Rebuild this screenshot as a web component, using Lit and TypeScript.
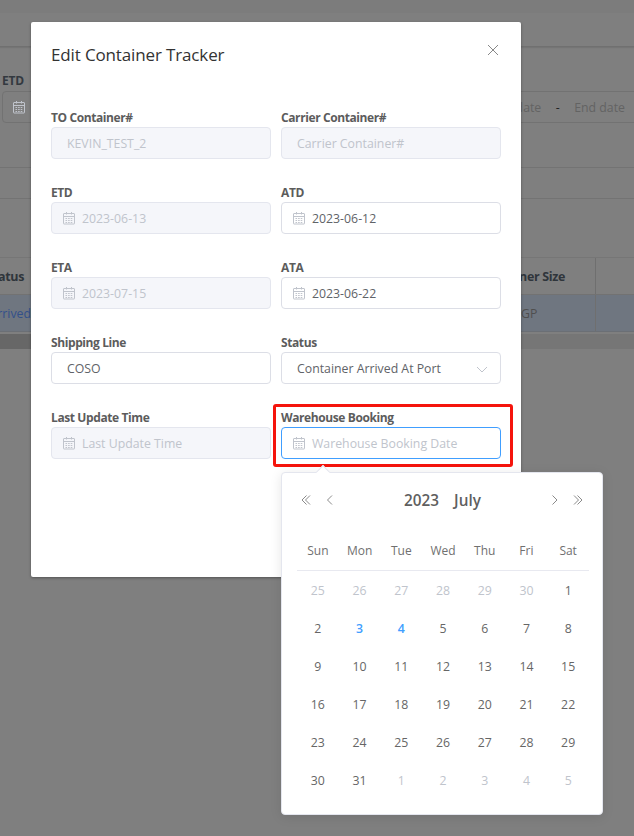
import {LitElement, css, html, svg} from 'lit';
import {customElement} from 'lit/decorators.js';

const calIcon = html`<svg class="cal" width="14" height="14" viewBox="0 0 14 14" fill="none" stroke="currentColor" stroke-width="1">
  <rect x="1.5" y="2.5" width="11" height="10.5" rx="0.5"></rect>
  <path d="M1.5 5.5h11M4.5 1v2.5M9.5 1v2.5"></path>
  <path d="M3.5 7.5h7M3.5 9.5h7M3.5 11.5h7" stroke-dasharray="1.6 1"></path>
</svg>`;

const chevron = (d: string) => svg`<path d=${d}></path>`;

interface Field {
  label: string;
  value?: string;
  placeholder?: string;
  disabled?: boolean;
  date?: boolean;
  select?: boolean;
  focused?: boolean;
}

const fields: Field[] = [
  {label: 'TO Container#', value: 'KEVIN_TEST_2', disabled: true},
  {label: 'Carrier Container#', placeholder: 'Carrier Container#', disabled: true},
  {label: 'ETD', value: '2023-06-13', disabled: true, date: true},
  {label: 'ATD', value: '2023-06-12', date: true},
  {label: 'ETA', value: '2023-07-15', disabled: true, date: true},
  {label: 'ATA', value: '2023-06-22', date: true},
  {label: 'Shipping Line', value: 'COSO'},
  {label: 'Status', value: 'Container Arrived At Port', select: true},
  {label: 'Last Update Time', placeholder: 'Last Update Time', disabled: true, date: true},
  {label: 'Warehouse Booking', placeholder: 'Warehouse Booking Date', date: true, focused: true},
];

const weekdays = ['Sun', 'Mon', 'Tue', 'Wed', 'Thu', 'Fri', 'Sat'];

const days: {n: number; cls?: string}[] = [
  ...[25, 26, 27, 28, 29, 30].map((n) => ({n, cls: 'muted'})),
  ...Array.from({length: 31}, (_, i) => ({n: i + 1, cls: i === 2 || i === 3 ? 'blue' : ''})),
  ...[1, 2, 3, 4, 5].map((n) => ({n, cls: 'muted'})),
];

@customElement('app-root')
export class AppRoot extends LitElement {
  static styles = css`
    :host {
      display: block;
      position: relative;
      width: 634px;
      height: 836px;
      overflow: hidden;
      background: #7f7f7f;
      font-family: 'Open Sans', 'Noto Sans', sans-serif;
      font-size: 12.3px;
      color: #5f5f5f;
    }

    /* page behind the mask */
    .page {
      display: flex;
      flex-direction: column;
      height: 100%;
    }
    .topstrip {
      height: 13px;
      background: #7c7c7c;
    }
    .subnav {
      height: 33px;
      background: #7f7f7f;
      border-bottom: 1px solid #707070;
      box-shadow: 0 1px 1px rgba(0, 0, 0, 0.08);
    }
    .filters {
      position: relative;
      height: 121px;
      border-bottom: 1px solid #737373;
      box-sizing: border-box;
      padding: 26px 0 0 2px;
    }
    .filters .lbl {
      font-weight: 700;
      color: #33393f;
      line-height: 16px;
      font-size: 12px;
      letter-spacing: -0.2px;
    }
    .bg-input {
      display: flex;
      align-items: center;
      margin-top: 2px;
      width: 400px;
      height: 32px;
      box-sizing: border-box;
      padding-left: 9px;
      border: 1px solid #727272;
      border-radius: 4px;
      color: #6a6a6a;
    }
    .bg-range {
      position: absolute;
      right: 0;
      top: 44px;
      width: 300px;
      height: 32px;
      box-sizing: border-box;
      display: flex;
      justify-content: flex-end;
      align-items: center;
      gap: 14.5px;
      padding-right: 9px;
      border-top: 1px solid #727272;
      border-bottom: 1px solid #727272;
      color: #636363;
    }
    .bg-range b {
      font-weight: 400;
      color: #222;
    }
    .rule {
      height: 31px;
      border-bottom: 1px solid #737373;
      box-sizing: content-box;
      margin-top: -1px;
    }
    .table {
      margin-top: 58px;
      border-top: 1px solid #767676;
    }
    .thead,
    .trow {
      display: flex;
      height: 36px;
      align-items: center;
    }
    .thead {
      border-bottom: 1px solid #727272;
      font-weight: 700;
      color: #2f353b;
      font-size: 12.5px;
      letter-spacing: -0.35px;
    }
    .trow {
      background: #6f7680;
      border-bottom: 1px solid #6b6f75;
      color: #4f4f4f;
    }
    .trow .link {
      color: #33508a;
    }
    .cell-left {
      width: 31px;
      box-sizing: border-box;
      overflow: hidden;
      white-space: nowrap;
      direction: rtl;
      text-align: left;
    }
    .thead .cell-left {
      padding-right: 7px;
    }
    .cell-right {
      width: 564px;
      box-sizing: border-box;
      padding-left: 490px;
      white-space: nowrap;
      height: 100%;
      display: flex;
      align-items: center;
    }
    .thead .cell-right {
      justify-content: flex-end;
      padding-right: 30px;
    }
    .cell-end {
      flex: 1;
      height: 100%;
      border-left: 1px solid #6f6f6f;
    }
    .scroll {
      height: 15px;
      margin-top: 2px;
      background: #767676;
    }
    .scroll div {
      width: 200px;
      height: 100%;
      background: #676767;
    }

    /* modal */
    .modal {
      position: absolute;
      left: 31px;
      top: 22px;
      width: 490px;
      height: 555px;
      box-sizing: border-box;
      padding: 20px;
      background: #fff;
      border-radius: 2px;
      box-shadow: 0 1px 3px rgba(0, 0, 0, 0.35);
    }
    .title {
      font-size: 17px;
      letter-spacing: -0.14px;
      line-height: 26px;
      color: #333;
    }
    .close {
      position: absolute;
      top: 22px;
      right: 22px;
      color: #888;
    }
    .form {
      display: grid;
      grid-template-columns: 220px 220px;
      column-gap: 10px;
      row-gap: 24px;
      margin-top: 40px;
    }
    .field label {
      display: block;
      height: 19px;
      line-height: 19px;
      font-size: 12px;
      font-weight: 700;
      letter-spacing: -0.4px;
      color: #5c5c5c;
      white-space: nowrap;
    }
    .input {
      display: flex;
      align-items: center;
      height: 32px;
      box-sizing: border-box;
      padding: 0 15px;
      border: 1px solid #dcdee6;
      border-radius: 4px;
      color: #5f6368;
      background: #fff;
      white-space: nowrap;
    }
    .input.date {
      padding-left: 10px;
    }
    .input.disabled {
      background: #f5f6fa;
      border-color: #e4e6ee;
      color: #c0c4cc;
    }
    .input.focused {
      border-color: #409eff;
    }
    .placeholder {
      color: #c0c4cc;
    }
    .cal {
      flex: none;
      margin-right: 6px;
      color: #c0c4cc;
    }
    .arrow {
      margin-left: auto;
      margin-right: -3px;
      color: #c0c4cc;
    }

    /* annotation and date popup */
    .highlight {
      position: absolute;
      left: 273px;
      top: 404px;
      width: 240px;
      height: 63px;
      box-sizing: border-box;
      border: 3px solid #f5140c;
      border-radius: 3px;
    }
    .popup {
      position: absolute;
      left: 281px;
      top: 472px;
      width: 322px;
      height: 343px;
      box-sizing: border-box;
      padding: 0 13px 0 15px;
      background: #fff;
      border: 1px solid #e4e6ee;
      border-radius: 4px;
      box-shadow: 0 2px 12px rgba(0, 0, 0, 0.1);
    }
    .popup::before {
      content: '';
      position: absolute;
      left: 36px;
      top: -6px;
      width: 9px;
      height: 9px;
      background: #fff;
      border-left: 1px solid #e4e6ee;
      border-top: 1px solid #e4e6ee;
      transform: rotate(45deg);
    }
    .cal-head {
      display: flex;
      align-items: center;
      height: 53px;
      color: #8a8a8a;
    }
    .cal-head svg {
      flex: none;
    }
    .cal-title {
      flex: 1;
      display: flex;
      justify-content: center;
      gap: 15px;
      font-size: 15.3px;
      font-weight: 600;
      color: #5f5f5f;
    }
    .nav-first {
      margin-left: 4px;
    }
    .nav-prev {
      margin-left: 14px;
    }
    .nav-last {
      margin-left: 13px;
      margin-right: 6px;
    }
    .cal-week,
    .cal-days {
      display: grid;
      grid-template-columns: repeat(7, 1fr);
      text-align: center;
    }
    .cal-week {
      height: 40px;
      margin-top: 2px;
      align-items: center;
      border-bottom: 1px solid #e8e9f0;
      padding-top: 2px;
      font-size: 12px;
      color: #707070;
    }
    .cal-days {
      grid-auto-rows: 38px;
      align-items: center;
      color: #666;
    }
    .muted {
      color: #c0c4cc;
    }
    .blue {
      color: #409eff;
      font-weight: 600;
    }
  `;

  private renderField(f: Field) {
    const cls = ['input', f.date ? 'date' : '', f.disabled ? 'disabled' : '', f.focused ? 'focused' : ''].join(' ');
    return html`<div class="field">
      <label>${f.label}</label>
      <div class=${cls}>
        ${f.date ? calIcon : ''}
        ${f.value ? html`<span>${f.value}</span>` : html`<span class="placeholder">${f.placeholder}</span>`}
        ${f.select
          ? html`<svg class="arrow" width="14" height="14" viewBox="0 0 14 14" fill="none" stroke="currentColor">
              <path d="M3 6l5 5 5-5"></path>
            </svg>`
          : ''}
      </div>
    </div>`;
  }

  render() {
    return html`
      <div class="page">
        <div class="topstrip"></div>
        <div class="subnav"></div>
        <div class="filters">
          <div class="lbl">ETD</div>
          <div class="bg-input">${calIcon}</div>
          <div class="bg-range"><span>Start date</span><b>-</b><span>End date</span></div>
        </div>
        <div class="rule"></div>
        <div class="table">
          <div class="thead">
            <div class="cell-left">Status</div>
            <div class="cell-right">Container Size</div>
            <div class="cell-end"></div>
          </div>
          <div class="trow">
            <div class="cell-left link">Arrived</div>
            <div class="cell-right">GP</div>
            <div class="cell-end"></div>
          </div>
        </div>
        <div class="scroll"><div></div></div>
      </div>

      <div class="modal">
        <div class="title">Edit Container Tracker</div>
        <svg class="close" width="12" height="12" viewBox="0 0 12 12" fill="none" stroke="currentColor">
          <path d="M1 1l10 10M11 1L1 11"></path>
        </svg>
        <div class="form">${fields.map((f) => this.renderField(f))}</div>
      </div>

      <div class="highlight"></div>

      <div class="popup">
        <div class="cal-head">
          <svg class="nav-first" width="10" height="10" viewBox="0 0 10 10" fill="none" stroke="currentColor">
            ${chevron('M5.5.5L1 5l4.5 4.5M9 .5L4.5 5 9 9.5')}
          </svg>
          <svg class="nav-prev" width="10" height="10" viewBox="0 0 10 10" fill="none" stroke="currentColor">
            ${chevron('M7 .5L2.5 5 7 9.5')}
          </svg>
          <div class="cal-title"><span>2023</span><span>July</span></div>
          <svg width="10" height="10" viewBox="0 0 10 10" fill="none" stroke="currentColor">
            ${chevron('M2.5.5L7 5 2.5 9.5')}
          </svg>
          <svg class="nav-last" width="10" height="10" viewBox="0 0 10 10" fill="none" stroke="currentColor">
            ${chevron('M1 .5L5.5 5 1 9.5M4.5.5L9 5 4.5 9.5')}
          </svg>
        </div>
        <div class="cal-week">${weekdays.map((d) => html`<span>${d}</span>`)}</div>
        <div class="cal-days">${days.map((d) => html`<span class=${d.cls ?? ''}>${d.n}</span>`)}</div>
      </div>
    `;
  }
}
